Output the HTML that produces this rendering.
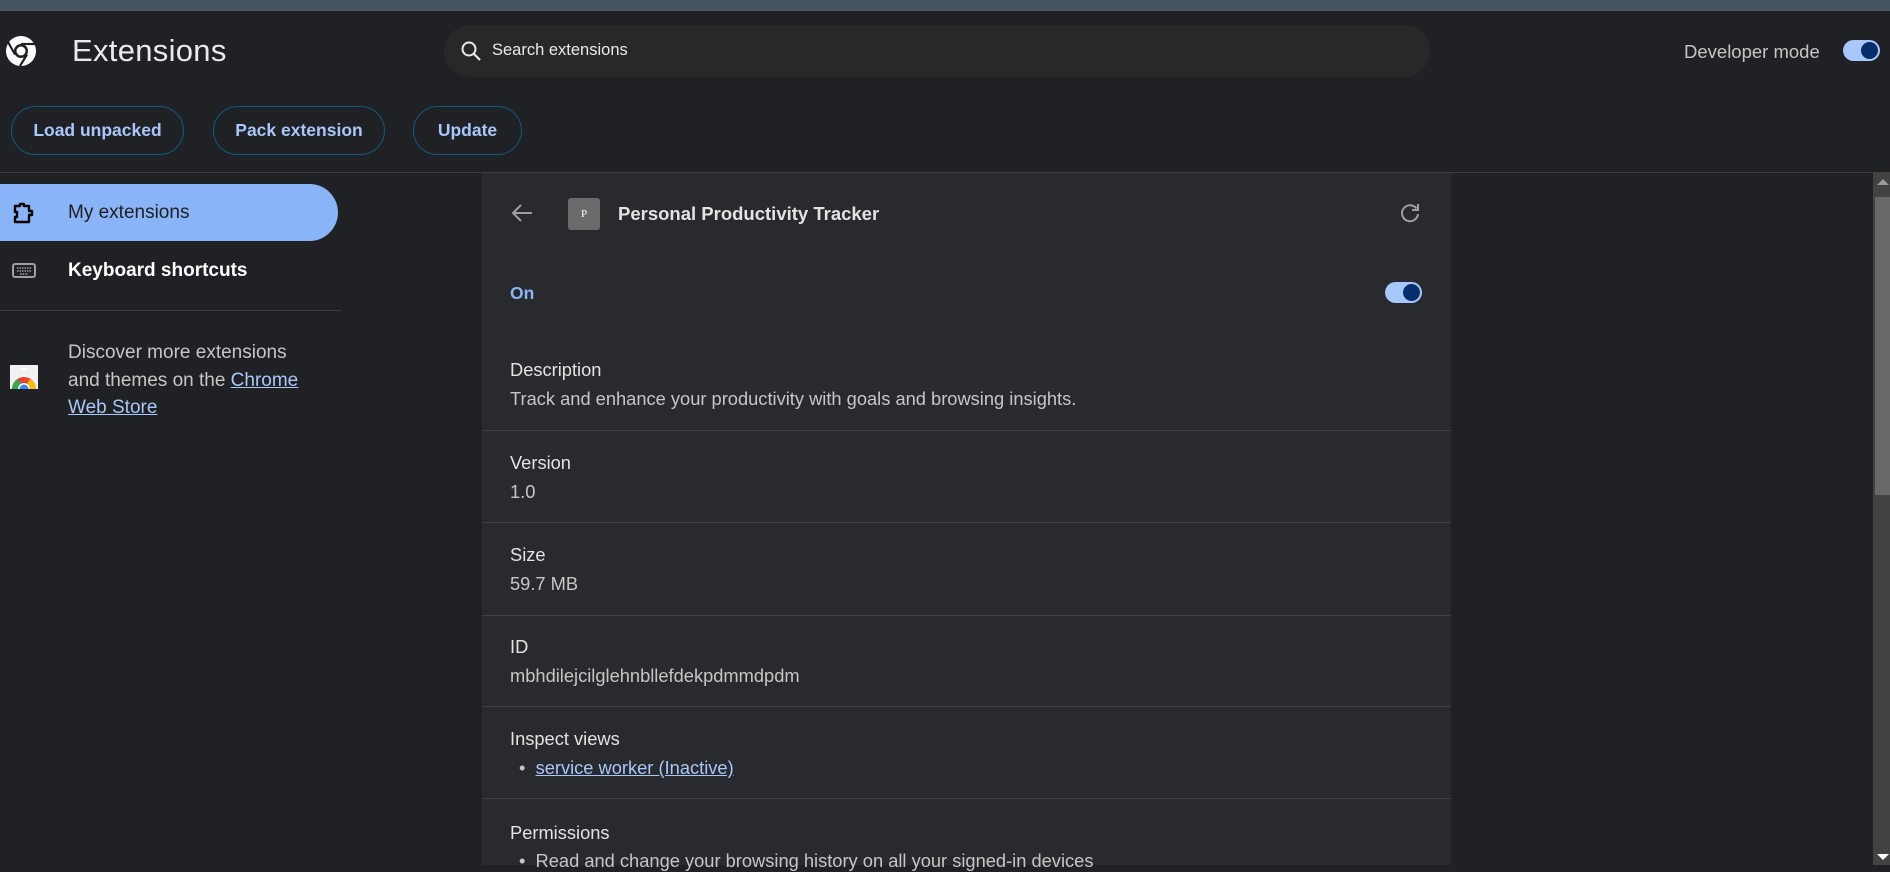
<!DOCTYPE html>
<html><head><meta charset="utf-8"><style>
*{margin:0;padding:0;box-sizing:border-box}
body{width:1890px;height:865px;overflow:hidden;background:#202124;font-family:"Liberation Sans",sans-serif;position:relative;color:#e8eaed}
.abs{position:absolute}
.topstrip{left:0;top:0;width:1890px;height:11px;background:#46555f}
.title{left:72px;top:33px;font-size:31px;color:#e8eaed;letter-spacing:0.3px}
.search{left:444px;top:25px;width:986px;height:52px;border-radius:26px;background:#282828}
.search span{position:absolute;left:48px;top:16px;font-size:16.5px;color:#e8eaed}
.dev{left:1684px;top:41px;font-size:18.5px;color:#c4c7c5}
.tog{width:37px;height:21px;border-radius:11px;background:#a8c7fa}
.tog i{position:absolute;right:2px;top:2px;width:17px;height:17px;border-radius:50%;background:#062e6f}
.btn{top:106px;height:49px;border:1px solid #0e5a7e;border-radius:25px;color:#a8c7fa;font-size:17.5px;font-weight:bold;display:flex;align-items:center;justify-content:center}
.hline{left:0;top:172px;width:1873px;height:1px;background:#3c3d40}
.pill{left:0;top:184px;width:338px;height:57px;background:#8ab4f8;border-radius:0 29px 29px 0}
.pill span{position:absolute;left:68px;top:18px;font-size:19px;color:#1f1f1f}
.kb{left:68px;top:260px;font-size:19px;font-weight:bold;color:#fff}
.sep2{left:0;top:310px;width:341px;height:1px;background:#3c3d40}
.disc{left:68px;top:339px;font-size:19px;line-height:27.5px;color:#c4c7c5;width:250px}
.disc a{color:#a8c7fa;text-decoration:underline}
.card{left:482px;top:173px;width:969px;height:692px;background:#292a2d}
.card .t{position:absolute;left:28px;font-size:18.3px;color:#e3e3e3}
.card .v{position:absolute;left:28px;font-size:18.3px;color:#c4c7c5}
.card .s{position:absolute;left:0;width:969px;height:1px;background:#3f4145}
.scroll{left:1873px;top:172px;width:17px;height:693px;background:#424242}
.thumb{left:1875px;top:197px;width:15px;height:298px;background:#686868}
</style></head><body>
<div class="abs topstrip"></div>
<svg class="abs" style="left:5px;top:34px" width="32" height="34" viewBox="0 0 32 34">
<circle cx="16" cy="17" r="15" fill="#fff"/>
<circle cx="16" cy="17" r="7" fill="#202124"/>
<circle cx="16" cy="17" r="4.5" fill="#fff"/>
<path d="M16 10 L30 10" stroke="#202124" stroke-width="2.2"/>
<path d="M10 20.5 L3 8" stroke="#202124" stroke-width="2.2"/>
<path d="M22 20.5 L15 32" stroke="#202124" stroke-width="2.2"/>
</svg>
<div class="abs title">Extensions</div>
<div class="abs search">
<svg style="position:absolute;left:16px;top:15px" width="22" height="22" viewBox="0 0 22 22"><circle cx="9" cy="9" r="6.5" stroke="#e8eaed" stroke-width="2" fill="none"/><path d="M14 14 L20 20" stroke="#e8eaed" stroke-width="2.2"/></svg>
<span>Search extensions</span></div>
<div class="abs dev">Developer mode</div>
<div class="abs tog" style="left:1843px;top:40px"><i></i></div>
<div class="abs btn" style="left:11px;width:173px">Load unpacked</div>
<div class="abs btn" style="left:213px;width:172px">Pack extension</div>
<div class="abs btn" style="left:413px;width:109px">Update</div>
<div class="abs hline"></div>
<div class="abs pill">
<svg style="position:absolute;left:12px;top:18px" width="24" height="22" viewBox="0 0 24 22"><path d="M3 4 H8 V2 H12 V4 H17 V9 H20 V13 H17 V20 H3 V15 H5 V10 H3 Z" fill="none" stroke="#000" stroke-width="2.4" stroke-linejoin="round"/></svg>
<span>My extensions</span></div>
<svg class="abs" style="left:12px;top:263px" width="24" height="16" viewBox="0 0 24 16"><rect x="1" y="1" width="22" height="13" rx="2" fill="none" stroke="#9aa0a6" stroke-width="2"/><path d="M5 5h14M5 8h14M8 11h8" stroke="#9aa0a6" stroke-width="1.6" stroke-dasharray="1.5 1"/></svg>
<div class="abs kb">Keyboard shortcuts</div>
<div class="abs sep2"></div>
<svg class="abs" style="left:10px;top:365px" width="28" height="24" viewBox="0 0 28 24"><rect width="28" height="24" fill="#f1f1f1"/><rect x="11" y="3" width="6" height="2" fill="#fff"/><path d="M2 24 A12 12 0 0 1 26 24" fill="#ea4335"/><path d="M2 24 A12 12 0 0 1 8 14 L14 24 Z" fill="#34a853"/><path d="M26 24 A12 12 0 0 0 20 14 L14 24Z" fill="#fbbc04"/><circle cx="14" cy="24" r="6" fill="#fff"/><circle cx="14" cy="24" r="4.5" fill="#4285f4"/></svg>
<div class="abs disc">Discover more extensions and themes on the <a>Chrome</a> <a>Web Store</a></div>
<div class="abs card">
<svg style="position:absolute;left:29px;top:30px" width="22" height="20" viewBox="0 0 22 20"><path d="M21 10 H3 M10 2 L2 10 L10 18" stroke="#9aa0a6" stroke-width="2" fill="none"/></svg>
<div style="position:absolute;left:86px;top:25px;width:32px;height:32px;background:#6b6b6b;border-radius:3px;color:#fff;font-size:11px;text-align:center;line-height:32px;font-family:'Liberation Serif',serif">P</div>
<div style="position:absolute;left:136px;top:30px;font-size:18.5px;font-weight:bold;color:#e3e3e3">Personal Productivity Tracker</div>
<svg style="position:absolute;left:917px;top:29px" width="22" height="22" viewBox="0 0 22 22"><path d="M17.5 6.5 A8 8 0 1 0 19 12" stroke="#9aa0a6" stroke-width="2" fill="none"/><path d="M19 2 V8 H13" stroke="#9aa0a6" stroke-width="2" fill="none"/></svg>
<div style="position:absolute;left:28px;top:110px;font-size:17.5px;font-weight:bold;color:#8ab4f8">On</div>
<div class="tog" style="position:absolute;left:903px;top:109px"><i></i></div>
<div class="t" style="top:186px">Description</div>
<div class="v" style="top:215px">Track and enhance your productivity with goals and browsing insights.</div>
<div class="s" style="top:257px"></div>
<div class="t" style="top:279px">Version</div>
<div class="v" style="top:308px">1.0</div>
<div class="s" style="top:349px"></div>
<div class="t" style="top:371px">Size</div>
<div class="v" style="top:400px">59.7 MB</div>
<div class="s" style="top:442px"></div>
<div class="t" style="top:463px">ID</div>
<div class="v" style="top:492px">mbhdilejcilglehnbllefdekpdmmdpdm</div>
<div class="s" style="top:533px"></div>
<div class="t" style="top:555px">Inspect views</div>
<div class="v" style="top:584px;left:37px">•&nbsp;&nbsp;<span style="color:#a8c7fa;text-decoration:underline">service worker (Inactive)</span></div>
<div class="s" style="top:625px"></div>
<div class="t" style="top:649px">Permissions</div>
<div class="v" style="top:677px;left:37px">•&nbsp;&nbsp;Read and change your browsing history on all your signed-in devices</div>
</div>
<div class="abs scroll"></div>
<div class="abs thumb"></div>
<svg class="abs" style="left:1877px;top:178px" width="12" height="8"><path d="M0 7 L6 1 L12 7Z" fill="#9a9a9a"/></svg>
<svg class="abs" style="left:1877px;top:853px" width="12" height="8"><path d="M0 1 L6 7 L12 1Z" fill="#fff"/></svg>
</body></html>
